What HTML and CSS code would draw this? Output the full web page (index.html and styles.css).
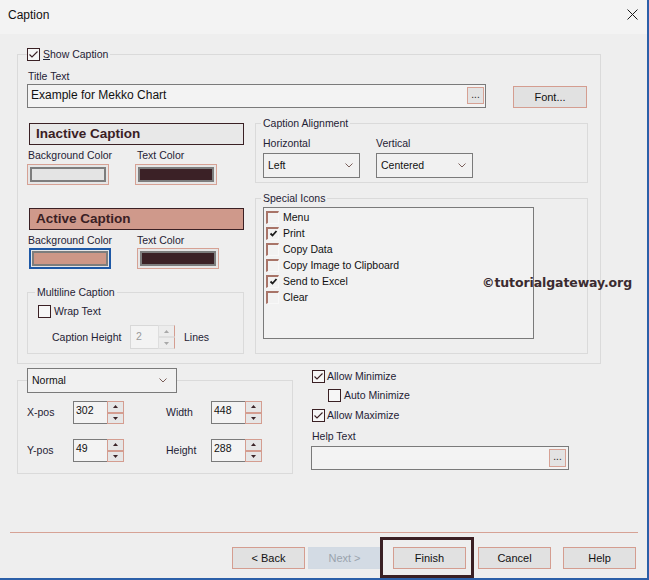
FILE: index.html
```html
<!DOCTYPE html>
<html>
<head>
<meta charset="utf-8">
<title>Caption</title>
<link rel="stylesheet" href="styles.css">
</head>
<body>
<div class="window">
  <div class="titlebar">
    <span class="title">Caption</span>
    <svg class="close" width="11" height="11" viewBox="0 0 11 11"><path d="M0.5 0.5L10.5 10.5M10.5 0.5L0.5 10.5" stroke="#1a1a1a" stroke-width="1"/></svg>
  </div>
  <div class="client">
    <div class="group main">
      <div class="legend chk-legend">
        <span class="cb"><svg width="11" height="11" viewBox="0 0 11 11"><path d="M1.5 5.5L4 8L9.5 2.5" fill="none" stroke="#3a2024" stroke-width="1.1"/></svg></span>
        <span><u>S</u>how Caption</span>
      </div>
      <div class="title-label">Title Text</div>
      <div class="title-row">
        <div class="textbox title-input"><span>Example for Mekko Chart</span><span class="dots-btn">...</span></div>
        <div class="btn font-btn">Font...</div>
      </div>
      <div class="columns">
        <div class="left-col">
          <div class="cap-bar inactive">Inactive Caption</div>
          <div class="color-grid first">
            <div class="clabel">Background Color</div>
            <div class="clabel second">Text Color</div>
            <div class="swatch"><div class="swatch-fill light"></div></div>
            <div class="swatch"><div class="swatch-fill dark"></div></div>
          </div>
          <div class="cap-bar active">Active Caption</div>
          <div class="color-grid active-grid">
            <div class="clabel">Background Color</div>
            <div class="clabel second">Text Color</div>
            <div class="swatch focused"><div class="swatch-fill salmon"></div></div>
            <div class="swatch shifted"><div class="swatch-fill dark"></div></div>
          </div>
          <div class="group multiline">
            <div class="legend ml-legend">Multiline Caption</div>
            <div class="cbrow wrap"><span class="cb"></span><span>Wrap Text</span></div>
            <div class="height-row">
              <span class="hlabel">Caption Height</span>
              <div class="spin disabled">
                <div class="spin-text">2</div>
                <div class="spin-btns">
                  <div class="sb"><svg width="5" height="3" viewBox="0 0 5 3"><polygon points="0,3 2.5,0 5,3" fill="#a8a8a8"/></svg></div>
                  <div class="sb"><svg width="5" height="3" viewBox="0 0 5 3"><polygon points="0,0 5,0 2.5,3" fill="#a8a8a8"/></svg></div>
                </div>
              </div>
              <span class="lines">Lines</span>
            </div>
          </div>
        </div>
        <div class="right-col">
          <div class="group align">
            <div class="legend al-legend">Caption Alignment</div>
            <div class="align-grid">
              <div>Horizontal</div>
              <div>Vertical</div>
              <div class="combo"><span>Left</span><svg width="8" height="5" viewBox="0 0 8 5"><path d="M0.5 0.5L4 4L7.5 0.5" fill="none" stroke="#7b5f5a" stroke-width="1"/></svg></div>
              <div class="combo"><span>Centered</span><svg width="8" height="5" viewBox="0 0 8 5"><path d="M0.5 0.5L4 4L7.5 0.5" fill="none" stroke="#7b5f5a" stroke-width="1"/></svg></div>
            </div>
          </div>
          <div class="group icons">
            <div class="legend al-legend">Special Icons</div>
            <div class="listbox">
              <div class="item"><span class="cb3d"></span>Menu</div>
              <div class="item"><span class="cb3d"><svg width="9" height="9" viewBox="0 0 9 9"><path d="M1.5 4.5L3.5 6.5L7.5 2" fill="none" stroke="#1c1c1c" stroke-width="1.8"/></svg></span>Print</div>
              <div class="item"><span class="cb3d"></span>Copy Data</div>
              <div class="item"><span class="cb3d"></span>Copy Image to Clipboard</div>
              <div class="item"><span class="cb3d"><svg width="9" height="9" viewBox="0 0 9 9"><path d="M1.5 4.5L3.5 6.5L7.5 2" fill="none" stroke="#1c1c1c" stroke-width="1.8"/></svg></span>Send to Excel</div>
              <div class="item"><span class="cb3d"></span>Clear</div>
            </div>
          </div>
        </div>
      </div>
    </div>

    <div class="lower">
      <div class="group pos-group">
        <div class="combo normal-combo"><span>Normal</span><svg width="8" height="5" viewBox="0 0 8 5"><path d="M0.5 0.5L4 4L7.5 0.5" fill="none" stroke="#7b5f5a" stroke-width="1"/></svg></div>
        <div class="pos-grid">
          <div class="plabel">X-pos</div>
          <div class="spin">
            <div class="spin-text">302</div>
            <div class="spin-btns">
              <div class="sb"><svg width="5" height="3" viewBox="0 0 5 3"><polygon points="0,3 2.5,0 5,3" fill="#3a2327"/></svg></div>
              <div class="sb"><svg width="5" height="3" viewBox="0 0 5 3"><polygon points="0,0 5,0 2.5,3" fill="#3a2327"/></svg></div>
            </div>
          </div>
          <div></div>
          <div class="plabel">Width</div>
          <div class="spin">
            <div class="spin-text">448</div>
            <div class="spin-btns">
              <div class="sb"><svg width="5" height="3" viewBox="0 0 5 3"><polygon points="0,3 2.5,0 5,3" fill="#3a2327"/></svg></div>
              <div class="sb"><svg width="5" height="3" viewBox="0 0 5 3"><polygon points="0,0 5,0 2.5,3" fill="#3a2327"/></svg></div>
            </div>
          </div>
          <div class="plabel">Y-pos</div>
          <div class="spin">
            <div class="spin-text">49</div>
            <div class="spin-btns">
              <div class="sb"><svg width="5" height="3" viewBox="0 0 5 3"><polygon points="0,3 2.5,0 5,3" fill="#3a2327"/></svg></div>
              <div class="sb"><svg width="5" height="3" viewBox="0 0 5 3"><polygon points="0,0 5,0 2.5,3" fill="#3a2327"/></svg></div>
            </div>
          </div>
          <div></div>
          <div class="plabel">Height</div>
          <div class="spin">
            <div class="spin-text">288</div>
            <div class="spin-btns">
              <div class="sb"><svg width="5" height="3" viewBox="0 0 5 3"><polygon points="0,3 2.5,0 5,3" fill="#3a2327"/></svg></div>
              <div class="sb"><svg width="5" height="3" viewBox="0 0 5 3"><polygon points="0,0 5,0 2.5,3" fill="#3a2327"/></svg></div>
            </div>
          </div>
        </div>
      </div>
      <div class="lower-right">
        <div class="cbrow allow-min"><span class="cb"><svg width="11" height="11" viewBox="0 0 11 11"><path d="M1.5 5.5L4 8L9.5 2.5" fill="none" stroke="#3a2024" stroke-width="1.1"/></svg></span><span>Allow Minimize</span></div>
        <div class="cbrow auto-min"><span class="cb"></span><span>Auto Minimize</span></div>
        <div class="cbrow allow-max"><span class="cb"><svg width="11" height="11" viewBox="0 0 11 11"><path d="M1.5 5.5L4 8L9.5 2.5" fill="none" stroke="#3a2024" stroke-width="1.1"/></svg></span><span>Allow Maximize</span></div>
        <div class="help-label">Help Text</div>
        <div class="textbox help-input"><span class="dots-btn">...</span></div>
      </div>
    </div>

    <div class="separator"></div>

    <div class="buttons">
      <div class="pair">
        <div class="btn">&lt; Back</div>
        <div class="btn disabled-btn">Next &gt;</div>
      </div>
      <div class="btn">Finish</div>
      <div class="btn">Cancel</div>
      <div class="btn">Help</div>
    </div>
  </div>
  <div class="watermark">©tutorialgateway.org</div>
  <div class="highlight"></div>
</div>
</body>
</html>
```

FILE: styles.css
```css
* { box-sizing: border-box; }
html, body { margin: 0; padding: 0; }
body {
  width: 649px;
  height: 580px;
  overflow: hidden;
  font-family: "Liberation Sans", Arial, sans-serif;
  font-size: 10.5px;
  line-height: 13px;
  color: #1f2235;
  background: #eeeeee;
}
.window {
  position: relative;
  width: 649px;
  height: 580px;
  border-right: 2px solid #2b5fa8;
  border-bottom: 2px solid #2b5fa8;
  background: #eeeeee;
}
.titlebar {
  height: 34px;
  background: #f3f3f3;
  display: flex;
  align-items: center;
  justify-content: space-between;
  padding: 0 9px 4px 8px;
}
.title { font-size: 12px; color: #111; }
.close { display: block; margin-bottom: 1px; }

.client { padding-left: 17px; }

.group { border: 1px solid #dadada; }
.legend {
  display: flex;
  align-items: center;
  width: fit-content;
  height: 13px;
  margin-top: -7px;
  padding: 0 2px;
  background: #eeeeee;
}

/* checkbox */
.cb {
  width: 13px;
  height: 13px;
  border: 1px solid #3a2024;
  background: #f6f6f6;
  display: flex;
  align-items: center;
  justify-content: center;
  flex: none;
}
.cb svg { display: block; }

.main { margin-top: 20px; width: 584px; padding-bottom: 9px; }
.chk-legend { margin-left: 9px; padding-left: 0; gap: 3px; }
.title-label { margin: 9px 0 0 10px; }
.title-row { display: flex; align-items: flex-end; margin: 1px 0 0 9px; }
.textbox {
  border: 1px solid #7a7a7a;
  background: #f3f3f3;
  display: flex;
  align-items: center;
}
.title-input {
  width: 459px;
  height: 24px;
  justify-content: space-between;
  padding: 0 1px 1px 3px;
  font-size: 12px;
  color: #111;
}
.dots-btn {
  width: 17px;
  height: 17px;
  border: 1px solid #d6a194;
  background: #e3e3e3;
  font-size: 10px;
  line-height: 14px;
  text-align: center;
  color: #222;
}
.btn {
  width: 73px;
  height: 22px;
  border: 1px solid #d49d90;
  background: #e1e1e1;
  display: flex;
  align-items: center;
  justify-content: center;
  color: #111;
  font-size: 11px;
}
.font-btn { width: 74px; margin-left: 27px; }

.columns { display: flex; margin: 15px 0 0 9px; }
.left-col { width: 217px; }
.right-col { width: 333px; margin-left: 11px; }

.cap-bar {
  margin-left: 2px;
  width: 215px;
  height: 22px;
  border: 1px solid #3a2024;
  padding-left: 6px;
  font-weight: bold;
  font-size: 13.5px;
  line-height: 20px;
  color: #3a2024;
}
.inactive { background: #e8e8e8; }
.active { background: #cf998b; margin-top: 23px; }

.color-grid {
  display: grid;
  grid-template-columns: 108px 109px;
  margin-top: 4px;
  row-gap: 2px;
}
.active-grid { row-gap: 1px; }
.clabel { padding-left: 1px; }
.clabel.second { padding-left: 2px; }
.swatch {
  width: 82px;
  height: 21px;
  border: 1px solid #d6a194;
  padding: 2px;
  background: #e6e6e6;
}
.swatch-fill {
  height: 100%;
  border: 2px solid #7d7d7d;
}
.swatch-fill.light { background: #e4e4e4; }
.swatch-fill.dark { background: #3b2126; }
.swatch-fill.salmon { background: #cd9787; }
.swatch.focused {
  margin-left: 2px;
  border: 2px solid #1d58a6;
  padding: 1px;
}
.swatch.shifted { margin-left: 2px; }

.multiline { margin-top: 23px; width: 217px; padding-bottom: 4px; }
.ml-legend { margin-left: 7px; }
.cbrow { display: flex; align-items: center; height: 13px; }
.wrap { margin: 6px 0 0 10px; gap: 3px; }
.height-row { display: flex; align-items: center; height: 24px; margin: 7px 0 0 24px; }
.hlabel { width: 78px; }
.lines { margin-left: 9px; }

.spin { display: flex; width: 51px; height: 23px; }
.spin-text {
  flex: 1;
  border: 1px solid #7a7a7a;
  border-right: none;
  background: #f3f3f3;
  padding: 2px 0 0 2px;
  color: #111;
}
.spin-btns { width: 17px; display: flex; flex-direction: column; }
.sb {
  flex: 1;
  border: 1px solid #d49d90;
  background: #e6e6e6;
  display: flex;
  align-items: center;
  justify-content: center;
}
.sb svg { display: block; }
.spin.disabled { width: 45px; height: 24px; }
.spin.disabled .spin-text { border-color: #d8d8d8; color: #9a9a9a; padding-left: 5px; padding-top: 4px; }
.spin.disabled .sb { border-color: #dedede; border-right-color: #d49d90; background: #ececec; }

.align { height: 60px; }
.al-legend { margin-left: 5px; }
.align-grid {
  display: grid;
  grid-template-columns: 113px 113px;
  row-gap: 3px;
  margin: 7px 0 0 7px;
}
.combo {
  width: 97px;
  height: 25px;
  border: 1px solid #7a7a7a;
  background: #f1f1f1;
  display: flex;
  align-items: center;
  justify-content: space-between;
  padding: 0 6px 0 4px;
  color: #111;
}
.combo svg { display: block; }

.icons { margin-top: 15px; height: 156px; }
.listbox {
  margin: 2px 0 0 7px;
  width: 271px;
  height: 132px;
  border: 1px solid #7a7a7a;
  background: #f2f2f2;
  padding: 1px 0 0 2px;
}
.item { display: flex; align-items: center; height: 16px; gap: 4px; color: #111; }
.cb3d {
  width: 13px;
  height: 13px;
  border-top: 2px solid #a87468;
  border-left: 2px solid #a87468;
  border-right: 1px solid #f8f8f8;
  border-bottom: 1px solid #f8f8f8;
  background: #f2f2f2;
  display: flex;
  align-items: center;
  justify-content: center;
  flex: none;
}
.cb3d svg { display: block; }

.lower { display: flex; align-items: flex-start; }
.pos-group { margin-top: 16px; width: 276px; padding-bottom: 11px; }
.normal-combo { margin: -13px 0 0 9px; width: 150px; padding: 0 9px 0 4px; }
.pos-grid {
  display: grid;
  grid-template-columns: 46px 51px 42px 45px 51px;
  grid-auto-rows: 23px;
  row-gap: 15px;
  margin: 8px 0 0 9px;
}
.plabel { padding-top: 5px; }

.lower-right { margin: 6px 0 0 18px; width: 258px; }
.allow-min { margin-left: 1px; gap: 2px; }
.auto-min { margin: 6px 0 0 17px; gap: 3px; }
.allow-max { margin: 7px 0 0 1px; gap: 2px; }
.help-label { margin-top: 8px; padding-left: 1px; }
.help-input {
  margin-top: 3px;
  width: 258px;
  height: 24px;
  justify-content: flex-end;
  padding-right: 2px;
}
.help-input .dots-btn { height: 18px; }

.separator {
  margin: 58px 0 0 -7px;
  width: 628px;
  height: 1px;
  background: #d6a295;
}

.buttons { display: flex; gap: 12px; margin: 14px 0 0 215px; }
.pair { display: flex; gap: 3px; }
.disabled-btn {
  border-color: #d2dae3;
  background: #d3dbe4;
  color: #9aa3ad;
}

.watermark {
  position: absolute;
  left: 482px;
  top: 275px;
  font-family: "DejaVu Sans", sans-serif;
  font-weight: bold;
  font-size: 12.5px;
  letter-spacing: -0.1px;
  line-height: 16px;
  color: #3b2b30;
}
.highlight {
  position: absolute;
  left: 380px;
  top: 537px;
  width: 94px;
  height: 41px;
  border: 3px solid #3a2024;
}
```
